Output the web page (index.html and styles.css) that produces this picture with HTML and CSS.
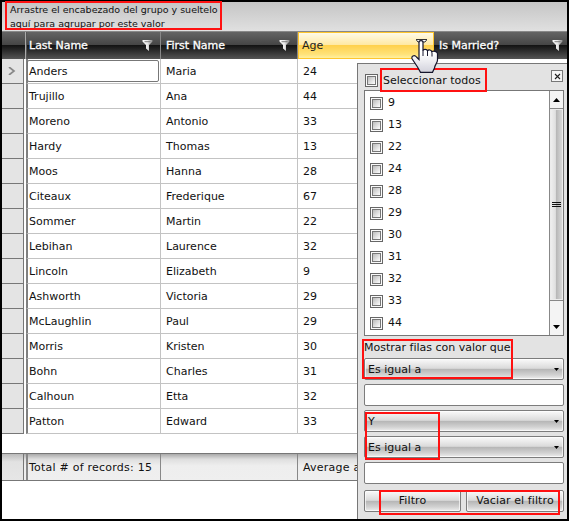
FILE: index.html
```html
<!DOCTYPE html>
<html lang="es">
<head>
<meta charset="utf-8">
<title>Grid</title>
<link rel="stylesheet" href="styles.css">
</head>
<body>
<svg class="defs" width="0" height="0">
  <defs>
    <linearGradient id="metal" x1="0" x2="1" y1="0" y2="0">
      <stop offset="0" stop-color="#fff"/><stop offset=".5" stop-color="#e8e8e8"/><stop offset="1" stop-color="#888"/>
    </linearGradient>
    <linearGradient id="hand" x1="0" x2="0" y1="0" y2="1">
      <stop offset=".4" stop-color="#fff"/><stop offset="1" stop-color="#d2d2dc"/>
    </linearGradient>
    <symbol id="funnel" viewBox="0 0 11 11"><path d="M.5 0h10v1.500L7 5v6L4 8.500V5L.5 1.500z" fill="url(#metal)"/><path d="M2.500 1.700h6" stroke="#666" stroke-width=".8"/></symbol>
    <symbol id="funnel-dark" viewBox="0 0 11 11"><path d="M0 .5h11L9 3H2z" fill="#fff" stroke="#333" stroke-width="1"/></symbol>
  </defs>
</svg>
<div class="window">
  <div class="group-panel">Arrastre el encabezado del grupo y sueltelo<br>aquí para agrupar por este valor</div>
  <div class="head">
    <div class="corner"></div>
    <div class="th">Last Name<svg><use href="#funnel"/></svg></div>
    <div class="th">First Name<svg><use href="#funnel"/></svg></div>
    <div class="th active">Age<svg><use href="#funnel-dark"/></svg></div>
    <div class="th">Is Married?<svg><use href="#funnel"/></svg></div>
  </div>
  <div class="rows" id="rows"></div>
  <div class="foot">
    <div class="rowhead"></div>
    <div class="td">Total # of records: 15</div><div class="td"></div><div class="td">Average age</div><div class="td"></div>
  </div>
  <div class="popup">
    <div class="top"><span class="check"></span><span class="all">Seleccionar todos</span>
      <span class="close"><svg width="7" height="7" viewBox="0 0 7 7"><path d="M1 1l5 5M6 1L1 6" stroke="#222" stroke-width="1.100"/></svg></span></div>
    <div class="listbox">
      <div class="options" id="options"></div>
      <div class="scroll">
        <div class="arrow"><svg width="7" height="4"><path d="M0 4L3.500 0 7 4z"/></svg></div>
        <div class="thumb"><i></i><i></i><i></i></div>
        <div class="arrow down"><svg width="7" height="4"><path d="M0 0h7L3.500 4z"/></svg></div>
      </div>
    </div>
    <div class="caption">Mostrar filas con valor que</div>
    <div class="fields">
      <div class="combo">Es igual a<svg width="5" height="3"><path d="M0 0h5L2.500 3z"/></svg></div>
      <div class="input"></div>
      <div class="combo">Y<svg width="5" height="3"><path d="M0 0h5L2.500 3z"/></svg></div>
      <div class="combo">Es igual a<svg width="5" height="3"><path d="M0 0h5L2.500 3z"/></svg></div>
      <div class="input"></div>
    </div>
    <div class="buttons"><div class="button">Filtro</div><div class="button">Vaciar el filtro</div></div>
  </div>
</div>
<div class="mark m1"></div><div class="mark m2"></div><div class="mark m3"></div><div class="mark m4"></div><div class="mark m5"></div>
<svg class="cursor" width="29" height="33" viewBox="0 0 29 33"><path d="M8 2.500c0-2.400 4-2.400 4 0v8c.5-1.800 4-1.500 4.500.3 1-1.500 4-1 4.300 1 1.500-1.200 5.700-.5 5.700 2V20c0 3-2.500 4-3 8l-2 4.300H9.500L6.500 27 1.200 19C-.3 16 3.500 14.500 5.500 17L8 19.500z" fill="url(#hand)" stroke="#15152c" stroke-width="1.200"/><path d="M12 10v6M16.500 11v5M21 12.500v4" stroke="#15152c"/></svg>
<script src="grid.js"></script>
</body>
</html>
```
FILE: styles.css
```css
* { box-sizing: border-box; }
body { margin: 0; width: 569px; height: 521px; background: #000; overflow: hidden; position: relative; font: 11px/14px "DejaVu Sans", sans-serif; color: #111; }
.defs { position: absolute; }
.window { position: absolute; left: 2px; top: 2px; width: 565px; height: 517px; background: #fff; overflow: hidden; }
.group-panel { height: 29px; padding: 1px 8px 0; font-size: 9.500px; line-height: 14px; background: linear-gradient(#c5c5c5, #e0e0e0); white-space: nowrap; }
.head, .row, .foot { display: grid; grid-template-columns: 24px 135px 137px 136px 133px; }
.head { height: 28px; border-top: 1px solid #888; background: linear-gradient(#646464, #454545 48%, #141414 50%, #202020 60%, #555 100%); }
.corner { border-right: 1px solid #aaa; }
.th { display: flex; align-items: center; justify-content: space-between; padding: 1px 7px 0 5px; border-right: 1px solid #888; color: #fff; -webkit-text-stroke: .3px #fff; white-space: nowrap; }
.th:nth-child(2) { padding-left: 2px; border-left: 1px solid #555; }
.th svg { width: 11px; height: 11px; margin-top: -2px; }
.th:last-child { border: 0; padding-right: 4px; }
.th.active { padding: 0 6px 0 3px; color: #222; -webkit-text-stroke: 0; background: linear-gradient(#fffbe8, #ffe9a2 48%, #ffd14d 50%, #ffe279 85%, #fff0a0); border: 1px solid #ffc62d; }
.row { height: 25px; }
.rowhead { margin-right: 2px; background: #e4e4e4; border: solid #777; border-width: 0 1px 1px 0; display: flex; align-items: center; padding-left: 6px; }
.td { padding: 6px 0 0 5px; border: solid #c3c3c3; border-width: 0 1px 1px 0; white-space: nowrap; }
.td:nth-child(2) { border-left: 2px solid #808080; padding-left: 1px; }
.td:last-child { border-right: 0; }
.current .td:nth-child(2) { position: relative; }
.current .td:nth-child(2)::after { content: ""; position: absolute; inset: 1px 1px 1px -1px; border: 1px solid #777; border-radius: 2px; }
.foot { height: 28px; margin-top: 19px; background: linear-gradient(#aaa, #dedede 20%, #eee 45%, #efefef); border: solid #777; border-width: 1px 0; }
.foot .td { border-color: #888; border-bottom: 0; padding-top: 7px; letter-spacing: .23px; }
.foot .rowhead { border-bottom: 0; background: linear-gradient(#bbb, #e2e2e2 30%, #e6e6e6); }
.popup { position: absolute; left: 355px; top: 61px; width: 210px; height: 456px; padding: 6px 3px 0 6px; border: solid #777; border-width: 1px 0 0 1px; background: #e3e3e3; }
.top { height: 20px; display: flex; align-items: flex-start; padding: 4px 0 0 1px; }
.check { width: 13px; height: 13px; flex: none; border: 1px solid #666; padding: 2px; background: linear-gradient(135deg, #bbb, #fff) content-box #fafafa; box-shadow: inset 0 0 0 1px #fafafa, inset 0 0 0 2px #777; }
.all { margin-left: 5px; line-height: 14px; white-space: nowrap; }
.close { margin: -4px 1px 0 auto; width: 12px; height: 12px; border: 1px solid #777; background: #f6f6f6; display: flex; align-items: center; justify-content: center; }
.listbox { height: 246px; border: 1px solid #777; background: #fff; display: flex; justify-content: space-between; }
.options { padding: 1px 0 0 5px; }
.option { height: 22px; display: flex; align-items: center; gap: 5px; }
.scroll { width: 14px; border-left: 1px solid #888; background: #ececec; display: flex; flex-direction: column; }
.arrow { height: 18px; display: flex; justify-content: center; align-items: center; border-bottom: 1px solid #888; background: #f4f4f4; }
.thumb { flex: 1; margin: 1px 1px; background: linear-gradient(90deg, #eee, #e0e0e0 40%, #b8b8b8 50%, #d8d8d8); display: flex; flex-direction: column; justify-content: center; align-items: center; gap: 1px; }
.thumb i { width: 9px; height: 1px; background: #111; }
.down { height: 35px; border: 0; border-top: 1px solid #888; padding-top: 18px; }
.caption { height: 22px; padding-top: 5px; white-space: nowrap; }
.fields { display: grid; gap: 4px; }
.combo, .input, .button { height: 22px; border: 1px solid #7c7c7c; border-radius: 2px; }
.input { background: #fff; }
.combo, .button { display: flex; align-items: center; background: linear-gradient(#fafafa, #dadada 47%, #b5b5b5 50%, #d2d2d2 80%, #eee); box-shadow: inset 0 0 0 1px #ffffffaa; }
.combo { justify-content: space-between; padding: 1px 4px 0 3px; }
.buttons { display: grid; grid-template-columns: 97px 1fr; gap: 5px; margin-top: 6px; }
.button { justify-content: center; white-space: nowrap; letter-spacing: .1px; }
.mark { position: absolute; border: 2px solid #f11; }
.m1 { left: 5px; top: 1px; width: 217px; height: 29px; }
.m2 { left: 380px; top: 68px; width: 107px; height: 24px; }
.m3 { left: 362px; top: 339px; width: 151px; height: 40px; }
.m4 { left: 365px; top: 412px; width: 75px; height: 48px; }
.m5 { left: 379px; top: 490px; width: 181px; height: 25px; }
.cursor { position: absolute; left: 411px; top: 40px; }
```
FILE: grid.js
```js
const people = [['Anders','Maria',24],['Trujillo','Ana',44],['Moreno','Antonio',33],['Hardy','Thomas',13],['Moos','Hanna',28],['Citeaux','Frederique',67],['Sommer','Martin',22],['Lebihan','Laurence',32],['Lincoln','Elizabeth',9],['Ashworth','Victoria',29],['McLaughlin','Paul',29],['Morris','Kristen',30],['Bohn','Charles',31],['Calhoun','Etta',32],['Patton','Edward',33]];
document.getElementById('rows').innerHTML = people.map((p, i) =>
  `<div class="row${i ? '' : ' current'}"><div class="rowhead">${i ? '' : '<svg width="8" height="8"><path d="M1 0l5 4-5 4" fill="none" stroke="#888" stroke-width="1.700"/></svg>'}</div>${p.map(v => `<div class="td">${v}</div>`).join('')}<div class="td"></div></div>`).join('');
document.getElementById('options').innerHTML = [9,13,22,24,28,29,30,31,32,33,44].map(n =>
  `<div class="option"><span class="check"></span>${n}</div>`).join('');
```
